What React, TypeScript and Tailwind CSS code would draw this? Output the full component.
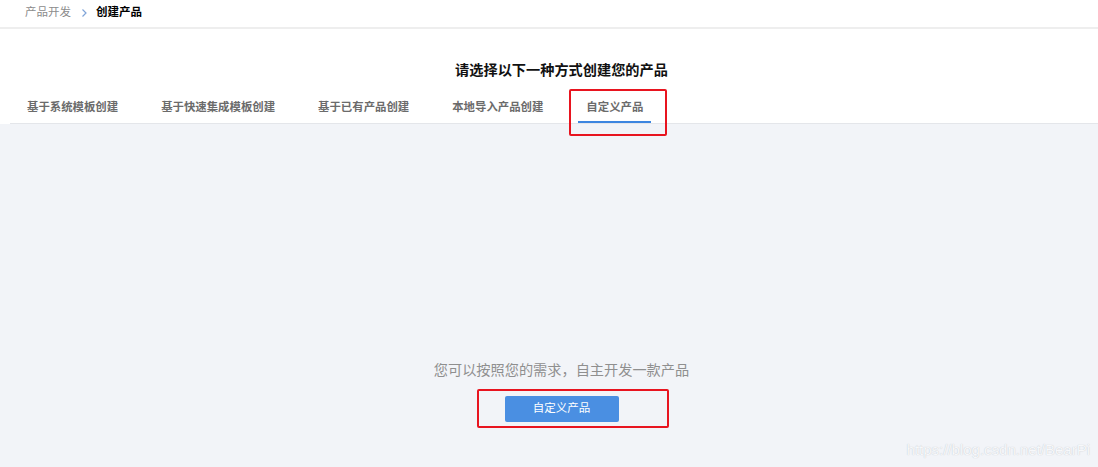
import React from 'react';

const tabs = ['基于系统模板创建', '基于快速集成模板创建', '基于已有产品创建', '本地导入产品创建', '自定义产品'];

const App: React.FC = () => {
    const active = 4;

    return (
        <div className="relative w-[1098px] h-[467px] overflow-hidden bg-white flex flex-col font-['Liberation_Sans','Noto_Sans_CJK_SC',sans-serif]">
            {/* breadcrumb */}
            <div className="h-[29px] shrink-0 border-b-2 border-[#eeeeee] flex items-center pl-[25px] pb-[2px] text-[11.5px]">
                <span className="text-[#8c8c8c]">产品开发</span>
                <svg className="w-[12px] h-[12px] ml-[7px] mr-[6px] text-[#7fa4d8]" viewBox="0 0 12 12" fill="none" stroke="currentColor" strokeWidth="1.2">
                    <path d="M4.5 2.5 L8 6 L4.5 9.5" />
                </svg>
                <span className="text-black font-bold">创建产品</span>
            </div>

            {/* title + tabs */}
            <div className="shrink-0 bg-white">
                <h2 className="mt-[31px] h-[20px] leading-[20px] pl-[25px] text-center text-[14.2px] font-bold text-[#111]">
                    请选择以下一种方式创建您的产品
                </h2>
                <div className="ml-[10px] mt-[15px] flex gap-[27px] pl-[9px] border-b border-[#e4e6ea]">
                    {tabs.map((t, i) => (
                        <div
                            key={t}
                            className={`h-[28px] px-[8px] flex items-center text-[11.4px] font-bold text-[#6b6b6b] border-b-2 ${i === active ? 'border-[#3d86e0]' : 'border-transparent'}`}
                        >
                            {t}
                        </div>
                    ))}
                </div>
            </div>

            {/* custom product panel */}
            <div className="flex-1 bg-[#f2f4f8] flex flex-col items-center pt-[236px] pl-[25px]">
                <p className="h-[20px] leading-[20px] text-[14.2px] text-[#8f8f8f]">您可以按照您的需求，自主开发一款产品</p>
                <button className="mt-[16px] w-[114px] h-[26px] rounded-[2px] bg-[#4a8fe2] text-white text-[11.5px]">
                    自定义产品
                </button>
            </div>

            {/* annotation boxes */}
            <div className="absolute left-[569px] top-[89px] w-[98px] h-[47px] border-2 border-[#e8141f] rounded-[2px]" />
            <div className="absolute left-[477px] top-[389px] w-[192px] h-[39px] border-2 border-[#e8141f] rounded-[2px]" />

            <div className="absolute right-[8px] bottom-[9px] text-[15px] leading-[16px] text-[#f7f8fa] font-['Liberation_Sans',sans-serif] [text-shadow:0_0_1px_#b9bec6]">
                https://blog.csdn.net/BearPi
            </div>
        </div>
    );
};

export default App;
